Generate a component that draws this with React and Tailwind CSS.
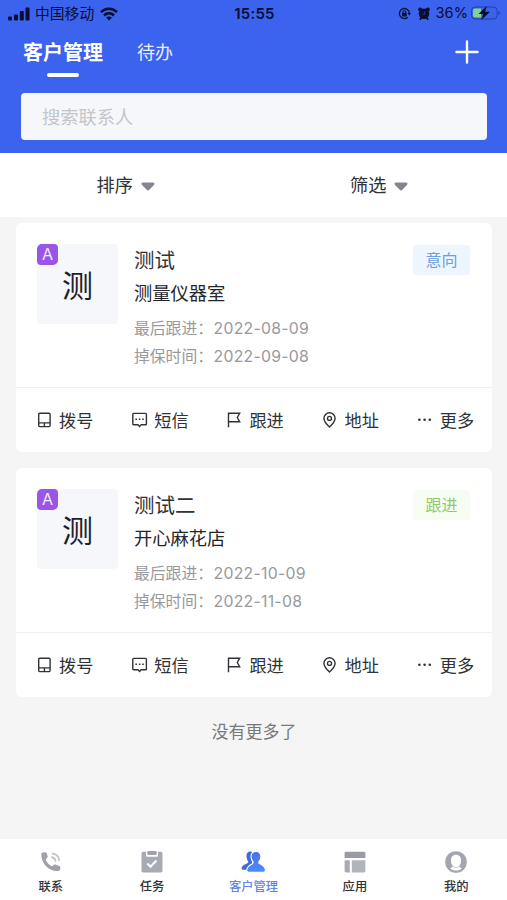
import { useState } from "react";

const customers = [
  {
    id: 1,
    name: "测试",
    company: "测量仪器室",
    level: "A",
    lastFollow: "2022-08-09",
    expire: "2022-09-08",
    status: "意向",
    statusClass: "bg-[#edf5fe] text-[#6a9ee0]",
  },
  {
    id: 2,
    name: "测试二",
    company: "开心麻花店",
    level: "A",
    lastFollow: "2022-10-09",
    expire: "2022-11-08",
    status: "跟进",
    statusClass: "bg-[#f8fdf3] text-[#93c96c]",
  },
];

/* STATUS BAR ICONS */

const SignalIcon = () => (
  <svg width="22" height="14" viewBox="0 0 22 14" fill="currentColor">
    <rect x="0" y="9.5" width="4" height="4" rx="1" />
    <rect x="6" y="7.5" width="4" height="6" rx="1" />
    <rect x="11.8" y="4" width="4" height="9.5" rx="1" />
    <rect x="17.5" y="0.5" width="4" height="13" rx="1" />
  </svg>
);

const WifiIcon = () => (
  <svg width="18" height="14" viewBox="0 0 18 14" fill="none" stroke="currentColor" strokeWidth="2.6">
    <path d="M1 5.2C5.5 .6 12.5 .6 17 5.2" />
    <path d="M4 8.5c2.9-2.8 7.1-2.8 10 0" />
    <path d="M9 13.5 6.2 10.7c1.6-1.5 4-1.5 5.6 0Z" fill="currentColor" stroke="none" />
  </svg>
);

const LockIcon = () => (
  <svg width="13" height="13" viewBox="0 0 13 13" fill="none" stroke="currentColor" strokeWidth="1.3">
    <path d="M9.8 10.2A5 5 0 1 1 11.4 6.2" />
    <path d="M9.6 6h3.4l-1.7 2.4Z" fill="currentColor" stroke="none" />
    <rect x="4.1" y="5.8" width="4.6" height="3.6" rx=".6" fill="currentColor" stroke="none" />
    <path d="M5 6V5a1.4 1.4 0 0 1 2.8 0v1" strokeWidth="1" />
  </svg>
);

const AlarmIcon = () => (
  <svg width="12" height="13" viewBox="0 0 12 13" fill="currentColor">
    <circle cx="6" cy="6.8" r="5.3" />
    <circle cx="2.2" cy="2.4" r="2" />
    <circle cx="9.8" cy="2.4" r="2" />
    <path d="M2 12.8 3.5 10.5M10 12.8 8.5 10.5" stroke="currentColor" strokeWidth="1.8" />
    <path d="M6.8 4.5v2.7H4.8" fill="none" stroke="#3350bd" strokeWidth=".7" />
  </svg>
);

const BatteryIcon = () => (
  <svg width="30" height="16" viewBox="0 0 30 16">
    <rect x=".6" y="2" width="25.5" height="12" rx="3.5" fill="none" stroke="#263f9f" strokeWidth="1" />
    <path d="M4 3.5h6v9H4a2 2 0 0 1-2-2v-5a2 2 0 0 1 2-2Z" fill="#7fd091" />
    <path d="M27.6 6v4.2c1.8-.6 1.8-3.6 0-4.2Z" fill="#263f9f" />
    <path d="M15.8 1 7.5 9h4.8l-2 6L19 6.8h-5Z" fill="#080e32" />
  </svg>
);

/* CARD ACTION ICONS */

const PhoneIcon = () => (
  <svg width="16" height="18" viewBox="0 0 16 18" fill="none" stroke="currentColor" strokeWidth="1.4">
    <rect x="1.7" y="2.2" width="11.4" height="13.4" rx="1" />
    <path d="M1.7 11.9h11.4M7.4 12v3.4" />
  </svg>
);

const SmsIcon = () => (
  <svg width="16" height="18" viewBox="0 0 16 18" fill="none" stroke="currentColor" strokeWidth="1.4">
    <path d="M1.6 2.4h12a.8.8 0 0 1 .8.8V13a.8.8 0 0 1-.8.8H9.2l-1.6 1.6L6 13.800H1.600a.8.8 0 0 1-.8-.8V3.200a.8.8 0 0 1 .8-.8Z" />
    <path d="M3.400 8.200H5M6.800 8.200h1.600M10.200 8.200h1.600" />
  </svg>
);

const FlagIcon = () => (
  <svg width="16" height="18" viewBox="0 0 16 18" fill="none" stroke="currentColor" strokeWidth="1.4">
    <path d="M1.5 16.2V2.3h11.200l-2.400 4.200 2.400 4.200H1.500" />
  </svg>
);

const PinIcon = () => (
  <svg width="16" height="18" viewBox="0 0 16 18" fill="none" stroke="currentColor" strokeWidth="1.4">
    <path d="M6.500 16C3.400 13 .9 10.400.9 7.400a5.600 5.600 0 0 1 11.200 0c0 3-2.500 5.600-5.600 8.600Z" />
    <circle cx="6.5" cy="7.4" r="2" />
  </svg>
);

const MoreIcon = () => (
  <svg width="16" height="18" viewBox="0 0 16 18" fill="currentColor">
    <circle cx="1.4" cy="8.8" r="1.3" />
    <circle cx="6.6" cy="8.8" r="1.3" />
    <circle cx="11.8" cy="8.8" r="1.3" />
  </svg>
);

/* TAB BAR ICONS */

const ContactTabIcon = () => (
  <svg width="22" height="22" viewBox="0 0 22 22">
    <path d="M1.500 2C3 1 5.600.8 6.600 1.800l1 3.400c.2 1-.2 1.700-1 2.300-.8.600-1 1.200-.5 2.100 1.100 2.300 2.600 3.900 4.900 5.200.9.500 1.400.4 2.100-.4.700-.9 1.400-1.100 2.400-.8l3.900 1.300c1.300.5 1.200 3.300.3 4.500C12.500 22.500 0 14 1.500 2Z" fill="#a0a2aa" />
    <path d="M11.800 6.200c2 .3 3.300 1.600 3.700 3.700M12.500 2.700c3.800.4 6.200 2.900 6.700 6.700" fill="none" stroke="#c0c2c8" strokeWidth="1.7" strokeLinecap="round" />
  </svg>
);

const TaskTabIcon = () => (
  <svg width="22" height="22" viewBox="0 0 22 22">
    <path d="M2.200.8h2.800v3.600c0 .8.500 1.300 1.300 1.300h9.400c.8 0 1.300-.5 1.300-1.300V.8h2.800c1 0 1.700.7 1.700 1.700v17.300c0 1-.7 1.700-1.700 1.700H2.200c-1 0-1.700-.7-1.700-1.700V2.500C.5 1.500 1.200.8 2.200.8Z" fill="#a9abb4" />
    <rect x="6.3" y="0" width="9.4" height="4" rx="1" fill="#a0a2ab" />
    <path d="m6.300 12.500 3.300 3.200 5.800-6.200" fill="none" stroke="#fff" strokeWidth="2" />
  </svg>
);

const CustomerTabIcon = () => (
  <svg width="26" height="22" viewBox="0 0 26 22">
    <defs>
      <linearGradient id="front" x1="0" y1="0" x2="0" y2="1">
        <stop offset="0" stopColor="#4a72e4" />
        <stop offset="1" stopColor="#4c8cf8" />
      </linearGradient>
    </defs>
    <path d="M12 .9C8.500-.3 6.300 2 6.500 5.200c.1 2 .6 3.700 1.500 4.900.6.900.3 1.600-.7 2.100-2.700 1.300-5 2-5.600 4.600-.3 1.400.3 2 1.400 2H12Z" fill="#3f68df" />
    <path d="M16 .5c3.400 0 5 2.300 4.900 5.300-.1 2-.8 3.600-1.800 4.800-.6.900-.4 1.500.5 2 3 1.400 5.200 2.300 5.700 5.900.2 1.800-.2 2.800-1.800 2.800H8.700c-1.600 0-2.200-1-1.900-2.700.5-3.500 3.400-4.600 5.600-5.900.9-.6 1-1.200.4-2.100-1.200-1.300-1.700-2.900-1.800-4.900C10.900 2.700 12.700.5 16 .5Z" fill="url(#front)" stroke="#fff" strokeWidth="1.1" />
  </svg>
);

const AppTabIcon = () => (
  <svg width="22" height="22" viewBox="0 0 22 22" fill="#a9abb4">
    <path d="M2 .7h18a1.400 1.400 0 0 1 1.400 1.400v5H.6v-5A1.400 1.400 0 0 1 2 .7Z" fill="#999ba4" />
    <path d="M.6 9.300h5.200v12.100H2A1.400 1.400 0 0 1 .6 20Z" />
    <path d="M7.800 9.300h13.600V20a1.400 1.400 0 0 1-1.400 1.400H7.800Z" fill="#b2b4bc" />
  </svg>
);

const MineTabIcon = () => (
  <svg width="22" height="22" viewBox="0 0 22 22">
    <circle cx="11" cy="11" r="10.8" fill="#a4a6af" />
    <path d="M11 3.800c-3.300 0-5 2.200-5 5.600 0 2.700.7 4.700 2.100 5.900-.3.900-1.600 1.400-3.100 1.900 3.500 3.100 8.500 3.100 12 0-1.500-.5-2.800-1-3.100-1.900 1.400-1.200 2.100-3.200 2.100-5.900 0-3.400-1.700-5.600-5-5.600Z" fill="#fff" />
    <path d="M8.200 15.800c1.800 1 3.800 1 5.600 0" stroke="#c9cad0" strokeWidth="1" fill="none" />
  </svg>
);

const actions = [
  { label: "拨号", Icon: PhoneIcon },
  { label: "短信", Icon: SmsIcon },
  { label: "跟进", Icon: FlagIcon },
  { label: "地址", Icon: PinIcon },
  { label: "更多", Icon: MoreIcon },
];

const tabs = [
  { key: "contact", label: "联系", Icon: ContactTabIcon },
  { key: "task", label: "任务", Icon: TaskTabIcon },
  { key: "customer", label: "客户管理", Icon: CustomerTabIcon },
  { key: "app", label: "应用", Icon: AppTabIcon },
  { key: "mine", label: "我的", Icon: MineTabIcon },
];

function FilterButton({ label }) {
  return (
    <button className="flex-1 flex items-center justify-center gap-2 pr-[2px] pt-[2px] text-[18.2px] text-[#303236]">
      {label}
      <svg width="14" height="9" viewBox="0 0 14 9" fill="#85858f">
        <path d="M2 .5h10c1.500 0 2 1.400 1 2.400L8.300 7.800c-.8.800-1.800.8-2.600 0L1 2.900C0 1.900.5.500 2 .5Z" />
      </svg>
    </button>
  );
}

function CustomerCard({ item }) {
  return (
    <div className="h-[229px] bg-white rounded-md flex flex-col">
      <div className="h-[164px] shrink-0 flex pl-[21px] pr-[22px] pt-[21px]">
        {/* AVATAR */}
        <div className="relative w-[81px] h-[80px] shrink-0 rounded bg-[#f5f7fb] flex items-center justify-center text-[31px] text-[#1d1f2b] pt-[4px]">
          {item.name[0]}
          <span className="absolute left-0 top-0 w-[21px] h-[21px] rounded-tl-[5px] rounded-br-[5px] rounded-tr-sm rounded-bl-sm bg-[#9b54e8] text-[#f3e8ff] text-[16px] leading-[21px] text-center">
            {item.level}
          </span>
        </div>

        <div className="ml-4 flex-1 whitespace-nowrap">
          <div className="pt-px text-[20.5px] leading-[32px] text-[#303236]">{item.name}</div>
          <div className="text-[18.3px] leading-[33px] text-[#25272c]">{item.company}</div>
          <div className="mt-[5px] flex text-[15.8px] leading-[28px] text-[#98999d]">
            <span className="w-[79.5px]">最后跟进：</span>
            <span className="tracking-[0.27px]">{item.lastFollow}</span>
          </div>
          <div className="flex text-[15.8px] leading-[28px] text-[#98999d]">
            <span className="w-[79.5px]">掉保时间：</span>
            <span className="tracking-[0.27px]">{item.expire}</span>
          </div>
        </div>

        <div className={`w-[57px] h-[30px] rounded text-[16px] leading-[31px] text-center mt-px ${item.statusClass}`}>
          {item.status}
        </div>
      </div>

      {/* ACTIONS */}
      <div className="flex-1 grid grid-cols-5 border-t border-[#eff0f2]">
        {actions.map(({ label, Icon }) => (
          <button key={label} className="flex items-center gap-[6px] pl-[21px] text-[17.2px] text-[#303236] whitespace-nowrap">
            <Icon />
            <span className="pt-px">{label}</span>
          </button>
        ))}
      </div>
    </div>
  );
}

export default function App() {
  const [activeTab, setActiveTab] = useState("customer");
  const [keyword, setKeyword] = useState("");

  return (
    <div className="w-full h-screen flex flex-col overflow-hidden bg-[#f5f5f5] font-[Inter,'Noto_Sans_CJK_SC',sans-serif]">

      {/* HEADER */}
      <div className="h-[153px] shrink-0 bg-[#3c63ed]">
        <div className="h-[27px] grid grid-cols-3 items-center pl-[8px] pr-[6px] text-[#080e32]">
          <div className="flex items-center text-[14.8px] whitespace-nowrap">
            <SignalIcon />
            <span className="ml-[5px] mr-[6px] pt-[2px]">中国移动</span>
            <WifiIcon />
          </div>
          <div className="pt-px text-center text-[15px] font-semibold tracking-[0.2px]">15:55</div>
          <div className="flex items-center justify-end">
            <LockIcon />
            <span className="ml-[7px]"><AlarmIcon /></span>
            <span className="ml-[6px] mr-[3px] pt-px text-[14.6px]">36%</span>
            <BatteryIcon />
          </div>
        </div>

        <div className="h-[66px] flex items-start pl-[23px] pr-[28px] text-white">
          <div className="flex flex-col items-center">
            <span className="pt-[2px] text-[20px] leading-[48px] font-bold">客户管理</span>
            <span className="-mt-[4px] w-8 h-1 rounded-full bg-white" />
          </div>
          <span className="ml-[34px] pt-[2px] text-[18px] leading-[48px] text-[#e9eeff]">待办</span>
          <svg className="ml-auto mt-[13px]" width="24" height="24" viewBox="0 0 24 24" stroke="#fff" strokeWidth="2.4" strokeLinecap="round">
            <path d="M12 1.5v21M1.5 12h21" />
          </svg>
        </div>

        <div className="pl-[21px] pr-[20px]">
          <input
            value={keyword}
            onChange={(e) => setKeyword(e.target.value)}
            className="block w-full h-[47px] rounded px-[21px] bg-[#f6f7fb] text-[18.3px] outline-none placeholder:text-[#c3c5ca]"
            placeholder="搜索联系人"
          />
        </div>
      </div>

      {/* FILTERS */}
      <div className="h-[64px] shrink-0 flex bg-white">
        <FilterButton label="排序" />
        <FilterButton label="筛选" />
      </div>

      {/* LIST */}
      <div className="flex-1 min-h-0 flex flex-col gap-4 pt-[6px] pl-[16px] pr-[15px]">
        {customers.map((item) => (
          <CustomerCard key={item.id} item={item} />
        ))}
        <p className="pt-px text-center text-[17px] leading-[36px] text-[#77797d]">没有更多了</p>
      </div>

      {/* TAB BAR */}
      <div className="h-[61px] shrink-0 grid grid-cols-5 bg-white">
        {tabs.map(({ key, label, Icon }) => (
          <button
            key={key}
            onClick={() => setActiveTab(key)}
            className={`flex flex-col items-center pt-[12px] text-[12.3px] leading-[18px] font-medium ${
              activeTab === key ? "text-[#6585ed]" : "text-[#303236]"
            }`}
          >
            <Icon />
            <span className="mt-[5px]">{label}</span>
          </button>
        ))}
      </div>

    </div>
  );
}
